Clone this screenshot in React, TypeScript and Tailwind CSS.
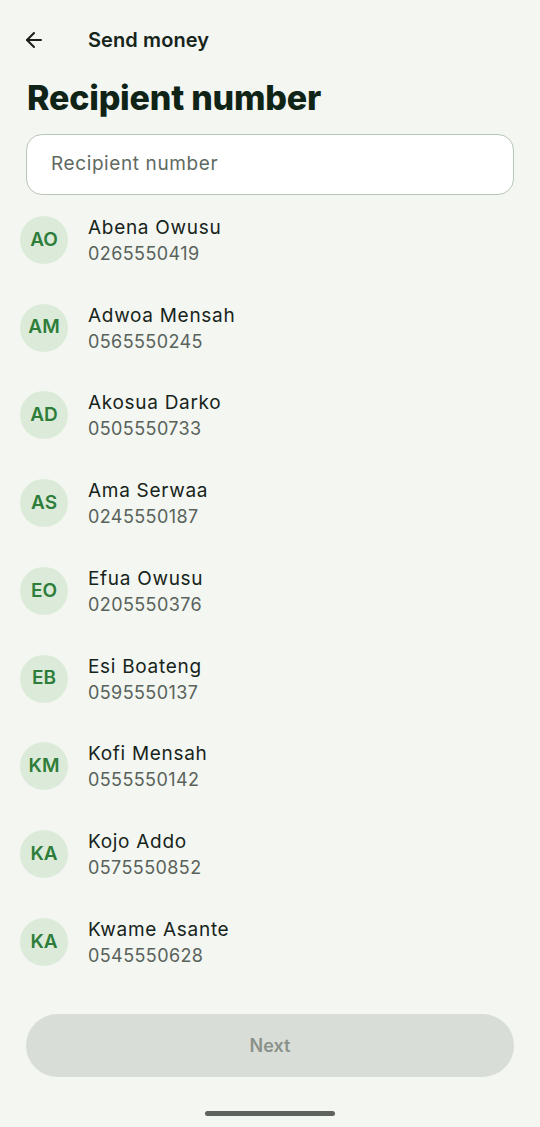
import { ArrowLeft } from 'lucide-react';

type Contact = {
  initials: string;
  name: string;
  phone: string;
};

const CONTACTS: Contact[] = [
  { initials: 'AO', name: 'Abena Owusu', phone: '0265550419' },
  { initials: 'AM', name: 'Adwoa Mensah', phone: '0565550245' },
  { initials: 'AD', name: 'Akosua Darko', phone: '0505550733' },
  { initials: 'AS', name: 'Ama Serwaa', phone: '0245550187' },
  { initials: 'EO', name: 'Efua Owusu', phone: '0205550376' },
  { initials: 'EB', name: 'Esi Boateng', phone: '0595550137' },
  { initials: 'KM', name: 'Kofi Mensah', phone: '0555550142' },
  { initials: 'KA', name: 'Kojo Addo', phone: '0575550852' },
  { initials: 'KA', name: 'Kwame Asante', phone: '0545550628' },
];

export default function App() {
  return (
    <div className="flex h-[1127px] w-[540px] flex-col bg-[#f3f6f1] font-['Inter','Noto_Sans',sans-serif] text-[#14261a]">
      {/* top bar */}
      <div className="flex h-[80px] items-center px-[22px]">
        <ArrowLeft className="h-[24px] w-[24px] text-[#1a1f1b]" strokeWidth={2} />
        <span className="ml-[42px] text-[20px] font-semibold tracking-[0.1px] text-[#16241a]">Send money</span>
      </div>

      <h1 className="px-[27px] text-[34px] font-extrabold leading-[36px] tracking-[-0.2px] text-[#0f2416]">
        Recipient number
      </h1>

      <div className="mx-[26px] mt-[18px] flex h-[61px] items-center rounded-[16px] border border-[#b7c7b6] bg-white px-[24px]">
        <span className="text-[19px] tracking-[0.6px] text-[#5f6a62]">Recipient number</span>
      </div>

      <ul className="mt-[1px] flex flex-col">
        {CONTACTS.map((c, i) => (
          <li key={i} className="flex h-[87.75px] items-center px-[20px]">
            <div className="flex h-[48px] w-[48px] shrink-0 items-center justify-center rounded-full bg-[#dcebd9] text-[19px] font-semibold text-[#2f7d3a]">
              {c.initials}
            </div>
            <div className="ml-[20px] flex flex-col pt-[2px]">
              <span className="text-[19px] leading-[26px] tracking-[0.7px] text-[#17241b]">{c.name}</span>
              <span className="text-[18px] leading-[26px] tracking-[0.4px] text-[#59625b]">{c.phone}</span>
            </div>
          </li>
        ))}
      </ul>

      <div className="flex-1" />

      <button className="mx-[26px] flex h-[63px] items-center justify-center rounded-full bg-[#d8ded7] text-[18px] font-semibold text-[#8a918a]">
        Next
      </button>

      <div className="flex h-[50px] items-center justify-center pt-[22px]">
        <div className="h-[5px] w-[130px] rounded-full bg-[#5f635e]" />
      </div>
    </div>
  );
}
